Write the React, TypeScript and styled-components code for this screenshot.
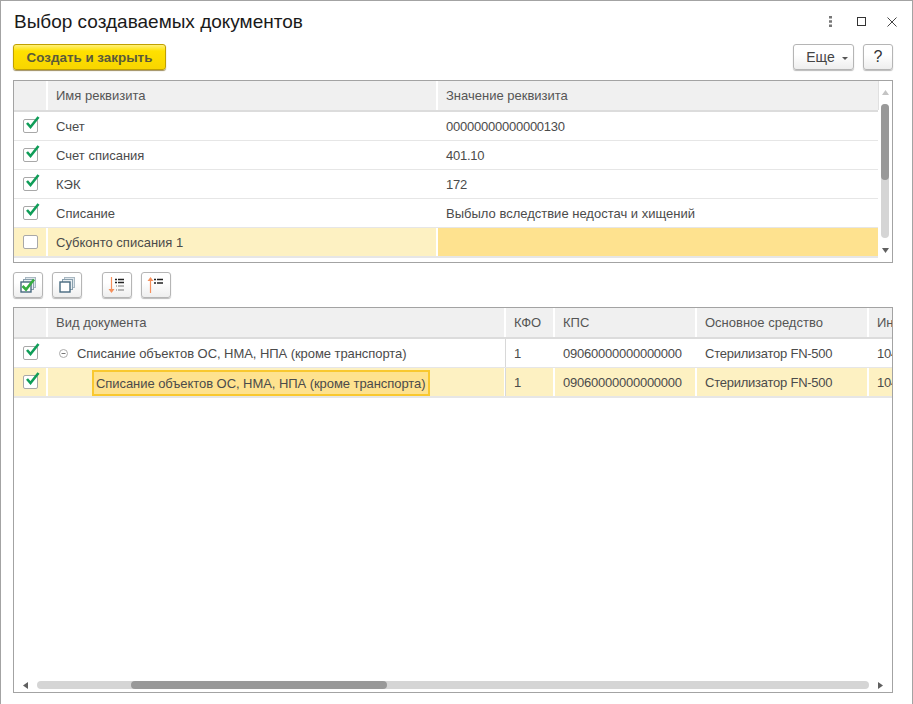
import React from 'react';
import styled, {createGlobalStyle} from 'styled-components';

const GlobalStyle = createGlobalStyle`
  html, body {
    margin: 0;
    padding: 0;
    background: #fff;
  }
  * {
    box-sizing: border-box;
  }
`

const Check = ({checked}: { checked: boolean }) => (
    <CheckBox>
        {checked && (
            <CheckMark width="16" height="14" viewBox="0 0 16 14">
                <path d="M2 8 L5.500 12 L13.500 2" fill="none" stroke="#0f9d58" strokeWidth="2.600"/>
            </CheckMark>
        )}
    </CheckBox>
)

const VScroll = () => (
    <VTrack>
        <svg width="7" height="5" viewBox="0 0 7 5"><path d="M3.500 0 L7 5 H0 Z" fill="#c4c4c4"/></svg>
        <VRail>
            <VThumb/>
        </VRail>
        <svg width="7" height="5" viewBox="0 0 7 5"><path d="M0 0 H7 L3.500 5 Z" fill="#606060"/></svg>
    </VTrack>
)

const HScroll = () => (
    <HTrack>
        <svg width="5" height="7" viewBox="0 0 5 7"><path d="M5 0 V7 L0 3.500 Z" fill="#606060"/></svg>
        <HRail>
            <HThumb/>
        </HRail>
        <svg width="5" height="7" viewBox="0 0 5 7"><path d="M0 0 L5 3.500 L0 7 Z" fill="#606060"/></svg>
    </HTrack>
)

const StackIcon = ({checked}: { checked?: boolean }) => (
    <svg width="17" height="17" viewBox="0 0 17 17">
        <rect x="5.500" y="0.500" width="10" height="10" fill="#dfe7ec" stroke="#a9b8c2"/>
        <rect x="3.500" y="2.500" width="10" height="10" fill="#e9eff2" stroke="#8aa0ae"/>
        <rect x="1" y="5" width="10" height="10" fill="#fff" stroke="#47697f" strokeWidth="1.400"/>
        {checked && <path d="M2.500 9 L6 12.500 L14 2.500" fill="none" stroke="#35ad3f" strokeWidth="2.600"/>}
    </svg>
)

const topRows = [
    {name: 'Счет', value: '00000000000000130', numeric: true, checked: true},
    {name: 'Счет списания', value: '401.10', numeric: true, checked: true},
    {name: 'КЭК', value: '172', numeric: true, checked: true},
    {name: 'Списание', value: 'Выбыло вследствие недостач и хищений', numeric: false, checked: true},
]

const docName = 'Списание объектов ОС, НМА, НПА (кроме транспорта)'

export default function App() {
    return (
        <Window>
            <GlobalStyle/>
            <TitleBar>
                <Title>Выбор создаваемых документов</Title>
                <WindowControls>
                    <DotsIcon width="3" height="11" viewBox="0 0 3 11">
                        <path d="M0 0h3v2.500H0zM0 4.250h3v2.500H0zM0 8.500h3V11H0z" fill="#777"/>
                    </DotsIcon>
                    <svg width="9" height="9" viewBox="0 0 9 9">
                        <rect x="0.500" y="0.500" width="8" height="8" fill="none" stroke="#333"/>
                    </svg>
                    <svg width="10" height="10" viewBox="0 0 10 10">
                        <path d="M0.500 0.500 L9.500 9.500 M9.500 0.500 L0.500 9.500" stroke="#444" fill="none"/>
                    </svg>
                </WindowControls>
            </TitleBar>

            <CommandBar>
                <PrimaryButton>Создать и закрыть</PrimaryButton>
                <CommandRight>
                    <MoreButton $width={61}>Еще<MoreCaret/></MoreButton>
                    <HelpButton $width={30}>?</HelpButton>
                </CommandRight>
            </CommandBar>

            <TopTable>
                <TableMain>
                    <TopHeader>
                        <HeaderCell/>
                        <HeaderCell>Имя реквизита</HeaderCell>
                        <HeaderCell>Значение реквизита</HeaderCell>
                    </TopHeader>
                    {topRows.map(row => (
                        <TopRow key={row.name}>
                            <CheckCell><Check checked={row.checked}/></CheckCell>
                            <Cell>{row.name}</Cell>
                            {row.numeric ? <NumberCell>{row.value}</NumberCell> : <Cell>{row.value}</Cell>}
                        </TopRow>
                    ))}
                    <TopRow $last>
                        <CheckCell $current><Check checked={false}/></CheckCell>
                        <Cell $current>Субконто списания 1</Cell>
                        <ActiveCell/>
                    </TopRow>
                </TableMain>
                <VScroll/>
            </TopTable>

            <IconBar>
                <IconGroup>
                    <IconButton><StackIcon checked/></IconButton>
                    <IconButton><StackIcon/></IconButton>
                </IconGroup>
                <IconGroup>
                    <IconButton>
                        <svg width="20" height="20" viewBox="0 0 20 20">
                            <path d="M4.500 2 V15" stroke="#f58f5c" strokeWidth="1.200"/>
                            <path d="M1.500 14 H7.500 L4.500 18 Z" fill="#f58f5c"/>
                            <path d="M8 4.500h2M11 4.500h6M8 7.500h2M11 7.500h6" stroke="#222" strokeWidth="1.300"/>
                            <path d="M9 11h1M11 11h6M9 15h1M11 15h6" stroke="#777" strokeWidth="1.200"/>
                        </svg>
                    </IconButton>
                    <IconButton>
                        <svg width="20" height="20" viewBox="0 0 20 20">
                            <path d="M4.500 18 V5" stroke="#f58f5c" strokeWidth="1.200"/>
                            <path d="M1.500 6 H7.500 L4.500 2 Z" fill="#f58f5c"/>
                            <path d="M8 4.500h2M11 4.500h6M8 8h2M11 8h6" stroke="#222" strokeWidth="1.500"/>
                        </svg>
                    </IconButton>
                </IconGroup>
            </IconBar>

            <BottomTable>
                <BottomScrollArea>
                    <BottomHeader>
                        <HeaderCell/>
                        <HeaderCell>Вид документа</HeaderCell>
                        <HeaderCell>КФО</HeaderCell>
                        <HeaderCell>КПС</HeaderCell>
                        <HeaderCell>Основное средство</HeaderCell>
                        <HeaderCell>Ин</HeaderCell>
                    </BottomHeader>
                    <BottomRow>
                        <CheckCell><Check checked/></CheckCell>
                        <TreeCell>
                            <CollapseIcon width="9" height="9" viewBox="0 0 9 9">
                                <circle cx="4.500" cy="4.500" r="4" fill="none" stroke="#aaa"/>
                                <path d="M2.500 4.500h4" stroke="#777"/>
                            </CollapseIcon>
                            <DocName>{docName}</DocName>
                        </TreeCell>
                        <DataCell>1</DataCell>
                        <NumberCell>09060000000000000</NumberCell>
                        <NumberCell>Стерилизатор FN-500</NumberCell>
                        <NumberCell>104</NumberCell>
                    </BottomRow>
                    <BottomRow $last>
                        <CheckCell $current><Check checked/></CheckCell>
                        <ChildCell $current>
                            <Editing><DocName>{docName}</DocName></Editing>
                        </ChildCell>
                        <DataCell $current>1</DataCell>
                        <NumberCell $current>09060000000000000</NumberCell>
                        <NumberCell $current>Стерилизатор FN-500</NumberCell>
                        <NumberCell $current>104</NumberCell>
                    </BottomRow>
                </BottomScrollArea>
                <HScroll/>
            </BottomTable>
        </Window>
    );
}

const Window = styled.div`
  width: 913px;
  height: 704px;
  border: 1px solid #a3a3a3;
  border-bottom: none;
  background: #fff;
  padding: 0 19px 0 12px;
  display: flex;
  flex-direction: column;
  font-family: "Liberation Sans", Arial, sans-serif;
  font-size: 13px;
  color: #4b4b4b;
  overflow: hidden;
`

const TitleBar = styled.div`
  height: 43px;
  display: flex;
  align-items: center;
  justify-content: space-between;
`

const Title = styled.div`
  font-size: 19px;
  color: #1a1a1a;
  margin-top: -1px;
  margin-left: 1px;
`

const WindowControls = styled.div`
  display: flex;
  align-items: center;
  gap: 21px;
  margin-right: -4px;
  margin-top: -2px;
`

const DotsIcon = styled.svg`
  margin-right: 4px;
`

const CommandBar = styled.div`
  height: 26px;
  display: flex;
  justify-content: space-between;
`

const CommandRight = styled.div`
  display: flex;
  gap: 9px;
`

const PrimaryButton = styled.div`
  width: 153px;
  border: 1px solid #c0a000;
  border-radius: 3px;
  background: linear-gradient(#fff07a 0, #ffe100 25%, #f8d500 100%);
  box-shadow: 0 1px 1px #a09060;
  display: flex;
  align-items: center;
  justify-content: center;
  font-size: 13.400px;
  font-weight: bold;
  color: #5a5a3a;
`

const GrayButton = styled.div<{ $width: number }>`
  width: ${p => p.$width}px;
  border: 1px solid #b5b5b5;
  border-radius: 3px;
  background: linear-gradient(#fff 0, #fff 40%, #eeeeee 100%);
  box-shadow: 0 1px 1px #bbb;
  display: flex;
  align-items: center;
  justify-content: center;
  font-size: 14px;
  color: #444;
`

const MoreButton = styled(GrayButton)`
  padding-left: 7px;
`

const HelpButton = styled(GrayButton)`
  font-size: 16px;
  color: #333;
`

const MoreCaret = styled.span`
  margin-left: 7px;
  margin-top: 2px;
  border-left: 3px solid transparent;
  border-right: 3px solid transparent;
  border-top: 3px solid #555;
`

const TableFrame = styled.div`
  border: 1px solid #a3a3a3;
  width: 880px;
`

const TopTable = styled(TableFrame)`
  margin-top: 10px;
  height: 183px;
  display: flex;
`

const TableMain = styled.div`
  width: 864px;
`

const topColumns = '34px 390px 1fr'
const bottomColumns = '34px 458px 49px 142px 172px 23px'

const RowBase = styled.div<{ $last?: boolean }>`
  display: grid;
  height: ${p => (p.$last ? 30 : 29)}px;
  border-bottom: ${p => (p.$last ? 2 : 1)}px solid #e6e6e6;
`

const TopRow = styled(RowBase)`
  grid-template-columns: ${topColumns};
`

const BottomRow = styled(RowBase)`
  grid-template-columns: ${bottomColumns};
`

const TopHeader = styled(TopRow)`
  height: 31px;
  border-bottom: 2px solid #dcdcdc;
`

const BottomHeader = styled(BottomRow)`
  height: 31px;
  border-bottom: 2px solid #dcdcdc;
`

const HeaderCell = styled.div`
  background: #f0f0f0;
  border-right: 2px solid #fff;
  box-shadow: 1px 0 0 #e0e0e0;
  padding: 0 0 0 8px;
  display: flex;
  align-items: center;
  color: #555;
  white-space: nowrap;
  overflow: hidden;

  &:last-child {
    border-right: none;
  }
`

const Cell = styled.div<{ $current?: boolean }>`
  background: ${p => (p.$current ? '#fdf1c2' : '#fff')};
  border-right: 2px solid #fff;
  padding: 0 0 0 8px;
  display: flex;
  align-items: center;
  white-space: nowrap;
  overflow: hidden;

  &:last-child {
    border-right: none;
  }
`

const NumberCell = styled(Cell)`
  letter-spacing: -0.240px;
`

const ActiveCell = styled.div`
  background: #fee28f;
`

const CheckCell = styled(Cell)`
  padding: 0 0 0 9px;
`

const DataCell = styled(Cell)`
  border-left: 1px solid #d8d8d8;
  margin-left: -1px;
`

const TreeCell = styled(Cell)`
  padding-left: 11px;
`

const DocName = styled.span`
  letter-spacing: -0.060px;
`

const ChildCell = styled(Cell)`
  padding: 0 0 0 44px;
  align-items: stretch;
`

const CollapseIcon = styled.svg`
  margin-right: 9px;
  flex: none;
`

const Editing = styled.div`
  width: 338px;
  flex: none;
  margin: 2px 0 0;
  background: #fee28f;
  border: 2px solid #f9c82f;
  padding-left: 2px;
  display: flex;
  align-items: center;
  color: #4b4b4b;
`

const CheckBox = styled.div`
  position: relative;
  width: 15px;
  height: 14px;
  border: 1px solid #a8a8a8;
  border-radius: 2px;
  background: #fff;
`

const CheckMark = styled.svg`
  position: absolute;
  left: 1px;
  top: -5px;
`

const VTrack = styled.div`
  width: 14px;
  padding: 9px 0;
  display: flex;
  flex-direction: column;
  align-items: center;
  justify-content: space-between;
`

const VRail = styled.div`
  width: 8px;
  flex: 1;
  margin: 9px 0 10px;
  border-radius: 4px;
  background: #d5d5d5;
`

const VThumb = styled.div`
  height: 76px;
  border-radius: 4px;
  background: #999;
`

const IconBar = styled.div`
  margin-top: 9px;
  height: 27px;
  display: flex;
  gap: 20px;
`

const IconGroup = styled.div`
  display: flex;
  gap: 9px;
`

const IconButton = styled.div`
  width: 30px;
  height: 26px;
  border: 1px solid #b5b5b5;
  border-radius: 3px;
  background: linear-gradient(#fff 0, #fff 40%, #eeeeee 100%);
  box-shadow: 0 1px 1px #bbb;
  display: flex;
  align-items: center;
  justify-content: center;
`

const BottomTable = styled(TableFrame)`
  margin-top: 8px;
  height: 386px;
  display: flex;
  flex-direction: column;
`

const BottomScrollArea = styled.div`
  flex: 1;
  overflow: hidden;
`

const HTrack = styled.div`
  height: 18px;
  padding: 0 9px 3px 9px;
  display: flex;
  align-items: flex-end;
  justify-content: space-between;
`

const HRail = styled.div`
  height: 8px;
  width: 832px;
  border-radius: 4px;
  background: #d5d5d5;
`

const HThumb = styled.div`
  height: 8px;
  width: 256px;
  margin-left: 94px;
  border-radius: 4px;
  background: #999;
`
